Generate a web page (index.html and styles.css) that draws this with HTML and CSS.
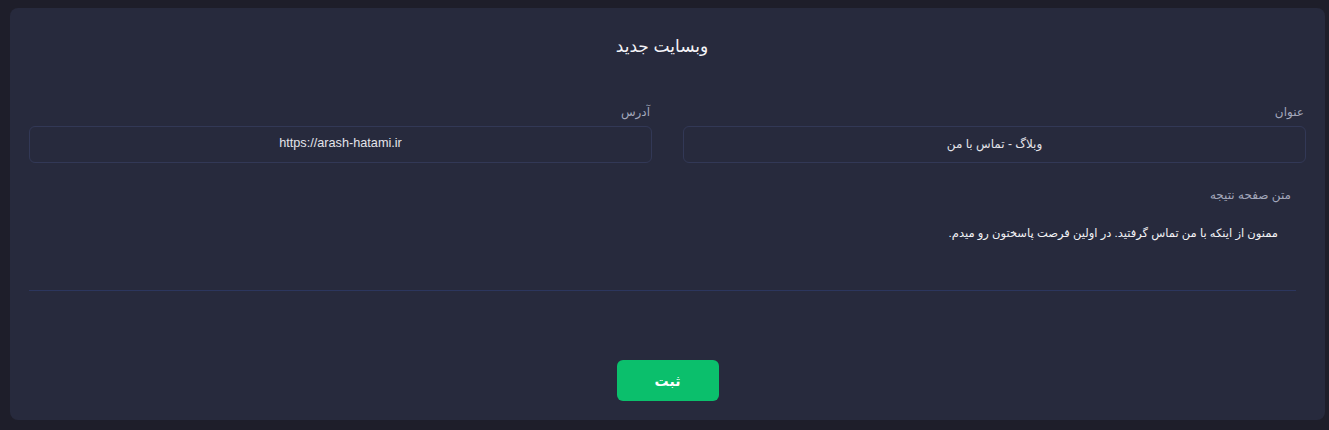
FILE: index.html
```html
<!DOCTYPE html>
<html lang="fa" dir="rtl">
<head>
<meta charset="utf-8">
<link rel="stylesheet" href="styles.css">
</head>
<body>
<div class="card">
  <h1 class="title">وبسایت جدید</h1>
  <div class="row">
    <div class="field">
      <label class="label">عنوان</label>
      <div class="input">وبلاگ - تماس با من</div>
    </div>
    <div class="field">
      <label class="label">آدرس</label>
      <div class="input input-ltr" dir="ltr">https://arash-hatami.ir</div>
    </div>
  </div>
  <div class="area">
    <label class="area-label">متن صفحه نتیجه</label>
    <p class="area-text">ممنون از اینکه با من تماس گرفتید. در اولین فرصت پاسختون رو میدم.</p>
  </div>
  <div class="actions">
    <button class="btn">ثبت</button>
  </div>
</div>
</body>
</html>
```

FILE: styles.css
```css
html, body {
  margin: 0;
  padding: 0;
}
body {
  background: #1e1e2a;
  font-family: "Liberation Sans", "DejaVu Sans", sans-serif;
  padding: 8px 4px 10px 10px;
  height: 430px;
  box-sizing: border-box;
}
.card {
  background: #272a3d;
  border-radius: 8px;
  height: 412px;
  box-sizing: border-box;
  padding: 0 19px;
  display: flex;
  flex-direction: column;
}
.title {
  margin: 28px 0 0;
  padding-right: 11px;
  text-align: center;
  font-size: 17px;
  font-weight: normal;
  color: #f4f4f8;
  line-height: 22px;
}
.row {
  display: grid;
  grid-template-columns: 1fr 1fr;
  column-gap: 31px;
  margin-top: 46px;
}
.field {
  display: flex;
  flex-direction: column;
}
.label {
  font-size: 12px;
  color: #a3a7bb;
  line-height: 16px;
  padding-right: 2px;
  margin-bottom: 6px;
}
.input {
  height: 37px;
  box-sizing: border-box;
  border: 1px solid #323856;
  border-radius: 6px;
  display: flex;
  align-items: center;
  justify-content: center;
  font-size: 12px;
  color: #e4e4ea;
  padding-bottom: 2px;
}
.input-ltr {
  font-size: 12.7px;
  padding-bottom: 4px;
}
.area {
  margin: 24px 10px 0 0;
  border-bottom: 1px solid #2c365e;
  height: 103px;
}
.area-label {
  display: block;
  font-size: 12px;
  color: #a3a7bb;
  line-height: 16px;
  padding-right: 5px;
}
.area-text {
  margin: 22px 18px 0 0;
  font-size: 11.5px;
  color: #f2f2f5;
  line-height: 16px;
}
.actions {
  display: flex;
  justify-content: center;
  margin-top: 69px;
}
.btn {
  width: 102px;
  height: 41px;
  border: none;
  border-radius: 6px;
  background: #0bbf6c;
  color: #ffffff;
  font-family: "Liberation Sans", "DejaVu Sans", sans-serif;
  font-size: 14px;
  font-weight: bold;
  cursor: pointer;
}
```
